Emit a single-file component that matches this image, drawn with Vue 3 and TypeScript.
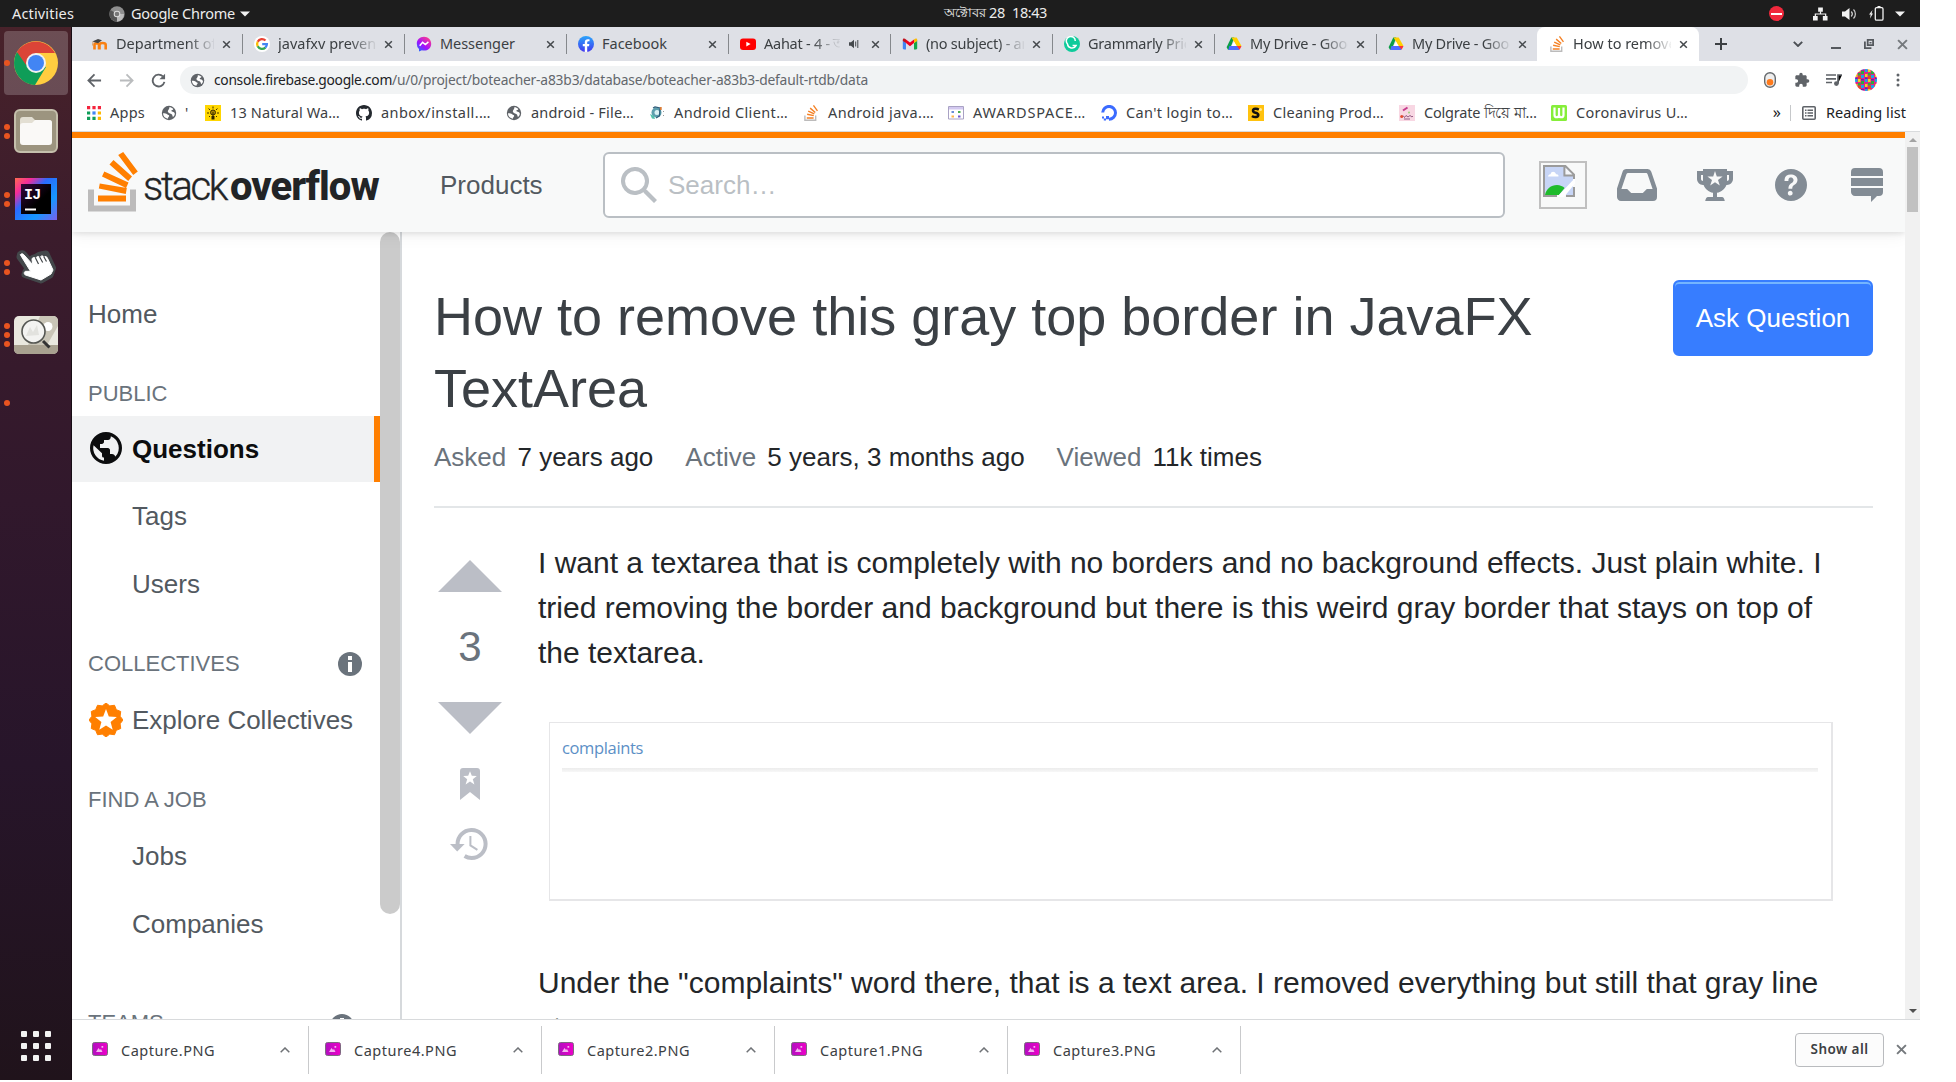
<script setup lang="ts">
interface Glyph { box: string; body: string }
interface Tab { icon: string; label: string; w?: number; ls?: boolean; audio?: boolean; active?: boolean }
interface Bookmark { icon: string; label: string; w: number; span: number }

// Stretches or tightens the tracking of a label so that it takes the given width.
const vFit = {
  mounted(el: HTMLElement, binding: { value?: number }) {
    if (!binding.value) return
    const count = (el.textContent || '').trim().length
    const natural = el.getBoundingClientRect().width
    el.style.letterSpacing = `${((binding.value - natural) / count).toFixed(3)}px`
  },
}

const so = '<path fill="#bcbbbb" d="M12 10.5h1.4V16H1.2v-5.500h1.400v4.100H12z"/><path fill="#f48024" d="M3.800 12.300h6.800v1.400H3.800zM4 9.900l.3-1.300 6.600 1.400-.3 1.300zM4.900 6.700l.6-1.200 6.100 2.800-.6 1.200zM6.700 3.700l.9-1.100 5.100 4.400-.9 1zM9.900.8l1.100-.8 4 5.400-1.100.8z"/>'
const globe = '<circle cx="8" cy="8" r="7.200" fill="#5f6368"/><path fill="#fff" d="M2 8.200c2 .1 3.300 0 4.200 1 .7.700 2 .7 2 1.700 0 .8-1.300.9-1.300 2.800C4 13.300 2 11 2 8.200zM8.300 2.300c1.600 0 2.900.6 4 1.700-.2 1.200-1.700.8-2 1.800-.3 1.200 3 .4 3.500 2.800.1 1.300-.7 2.600-1.800 3.500-.8-1.200-.4-2.800-1.800-3.200-1.500-.3-3.300-1.200-3.400-2.400 0-1.700 1.900-2 1.500-4.200z"/>'
const drive = '<path fill="#0b9d48" d="M5.300 1.500h3L3.700 13.800H2L.6 11.300z"/><path fill="#ffcf00" d="M5.500 1.500h5.200l4.800 8.600h-4.900z"/><path fill="#4e6cff" d="M3.400 10.100H15l-2 4H2.400z"/><path fill="#fff" d="M8 5.500l2.600 4.600H5.500z"/><path fill="#f33" d="M10.800 10.100h4.700l-1.900 3.700z"/>'

const glyphs: Record<string, Glyph> = {
  so: { box: '0 0 16 16', body: so },
  globe: { box: '0 0 16 16', body: globe },
  drive: { box: '0 0 16 16', body: drive },
  moodle: { box: '0 0 16 16', body: '<path d="M2.500 13.500V8.800C2.500 6.800 7 6.800 7 8.800v4.700M7.500 13.500V8.800c0-2.400 6.200-2.400 6.200 0v4.700" fill="none" stroke="#f98012" stroke-width="2.600"/><path d="M.3 5.500L6 3l4 1.200-4 3z" fill="#444"/><path d="M1 5.600L.5 9.500" stroke="#d9a26e"/>' },
  google: { box: '0 0 16 16', body: '<circle cx="8" cy="8" r="8" fill="#fff"/><g fill="none" stroke-width="2.300"><path stroke="#ea4335" d="M3.700 5.700A4.900 4.900 0 0111.500 4.500"/><path stroke="#fbbc05" d="M3.700 10.400a4.900 4.900 0 010-4.700"/><path stroke="#34a853" d="M3.700 10.300a4.900 4.900 0 007.700 1.300"/><path stroke="#4285f4" d="M8.200 8.100h4.700a4.800 4.800 0 01-1.600 3.600"/></g>' },
  messenger: { box: '0 0 16 16', body: '<defs><linearGradient id="ms" x1="0" y1="1" x2=".8" y2="0"><stop offset="0" stop-color="#0a7cff"/><stop offset=".45" stop-color="#a010ff"/><stop offset="1" stop-color="#ff3d8a"/></linearGradient></defs><path fill="url(#ms)" d="M8 .8c4.200 0 7.200 3 7.200 6.900 0 4-3 6.900-7.200 6.900-.8 0-1.500-.1-2.100-.3L3 15.400v-2.500A6.700 6.700 0 01.8 7.700C.8 3.800 3.800.8 8 .8z"/><path d="M3.700 9.800L6.600 6.300l2.800 2.300 3-2.700" fill="none" stroke="#fff" stroke-width="1.500"/>' },
  facebook: { box: '0 0 16 16', body: '<defs><linearGradient id="fb" x1="0" y1="0" x2="0" y2="1"><stop offset="0" stop-color="#2ba5fb"/><stop offset="1" stop-color="#4338ee"/></linearGradient></defs><circle cx="8" cy="8" r="8" fill="url(#fb)"/><path fill="#fff" d="M6.800 15.900v-5.600h-2V8h2V6.300c0-2 1.200-3.100 3-3.100.9 0 1.700.1 1.700.1v2h-1c-1 0-1.300.6-1.300 1.200V8h2.200l-.4 2.300H9.200v5.600z"/>' },
  youtube: { box: '0 0 16 16', body: '<rect y="2.400" width="16" height="11.500" rx="3" fill="#f00"/><path fill="#fff" d="M6.300 5.800l4.300 2.300-4.300 2.300z"/>' },
  gmail: { box: '0 0 16 16', body: '<path fill="#4285f4" d="M.8 4.500L4 7v6.400H2c-.7 0-1.200-.5-1.200-1.200z"/><path fill="#16a84a" d="M15.200 4.500L12 7v6.400h2c.7 0 1.200-.5 1.200-1.200z"/><path fill="#f00020" d="M4 3.600l4 3 4-3V7l-4 3.200L4 7z"/><path fill="#c1121f" d="M.8 4c0-1.600 1.700-1.900 3.200-.4v3.500L.8 4.900z"/><path fill="#fbbc04" d="M15.200 4c0-1.600-1.700-1.900-3.200-.4v3.500l3.200-2.200z"/>' },
  grammarly: { box: '0 0 16 16', body: '<circle cx="8" cy="8" r="8" fill="#0ecb9b"/><path d="M11.300 4.900A4.500 4.500 0 103.500 8a4.500 4.500 0 008.500 1.600H8.600" fill="none" stroke="#fff" stroke-width="1.500"/>' },
  apps: { box: '0 0 16 16', body: '<path fill="#f4243d" d="M1 1h3.200v3.200H1zM6.400 1h3.200v3.200H6.400zM11.800 1H15v3.200h-3.200z"/><path fill="#0f9d58" d="M1 6.400h3.200v3.200H1zM1 11.800h3.200V15H1zM6.400 11.800h3.200V15H6.400z"/><path fill="#4285f4" d="M6.400 6.400h3.200v3.200H6.400z"/><path fill="#ffb900" d="M11.800 6.400H15v3.200h-3.200zM11.800 11.800H15V15h-3.200z"/>' },
  bulb: { box: '0 0 16 16', body: '<path fill="#ffd600" d="M0 0h16v16H0z"/><circle cx="8" cy="7.500" r="2.500" fill="#ab8600" stroke="#3b2f00"/><path stroke="#3b2f00" fill="none" d="M8 1.500v2M2 8h2M12 8h2M3.600 3.500L5 5M12.400 3.500L11 5M4 12l1-1M12 12l-1-1M8 7v4"/><path fill="#2b2200" d="M6.500 11h3v3.500h-3z"/>' },
  github: { box: '0 0 16 16', body: '<path fill="#24292f" fill-rule="evenodd" d="M8 0C3.580 0 0 3.580 0 8c0 3.540 2.290 6.530 5.470 7.590.4.070.55-.17.55-.38 0-.19-.01-.82-.01-1.490-2.010.37-2.530-.49-2.690-.94-.09-.23-.48-.94-.82-1.130-.28-.15-.68-.52-.01-.53.63-.01 1.080.58 1.230.82.72 1.210 1.870.87 2.330.66.07-.52.28-.87.51-1.070-1.780-.2-3.640-.89-3.640-3.950 0-.87.31-1.590.82-2.150-.08-.2-.36-1.020.08-2.120 0 0 .67-.21 2.200.82.64-.18 1.320-.27 2-.27s1.360.09 2 .27c1.530-1.040 2.200-.82 2.200-.82.44 1.100.16 1.920.08 2.120.51.56.82 1.270.82 2.150 0 3.070-1.870 3.750-3.650 3.950.29.25.54.73.54 1.480 0 1.070-.01 1.930-.01 2.200 0 .21.15.46.55.38A8 8 0 0016 8c0-4.420-3.580-8-8-8z"/>' },
  client: { box: '0 0 16 16', body: '<circle cx="7.500" cy="7.500" r="5" fill="#5d9fae"/><circle cx="8" cy="7.500" r="2.500" fill="#d9f1f4"/><path d="M4 3l2-1 5 1-.5 8-3.500 2" fill="none" stroke="#2d5b78" stroke-width="1.200"/><path fill="#d97b35" d="M11 2h1.700v3H11z"/><path fill="#52c0ac" d="M1 9l4 2 1 3-3-.5z"/><path fill="#999" d="M14 6h1v1h-1zM14 10h1v1h-1z"/>' },
  award: { box: '0 0 16 16', body: '<path fill="#fff" stroke="#a9a2c4" d="M.5 1.500h15v12.500H.5z"/><path fill="#d3c9f0" d="M1 2h14v2.500H1z"/><path fill="#4caf50" d="M10 6h2.500v2H10z"/><path fill="#6a8fd8" d="M3.500 6H6v2H3.500z"/><path fill="#ffb547" d="M3.500 10.500H6v2H3.500z"/><path fill="#6e5bd1" d="M10 10.500h2.500v2H10z"/>' },
  ocean: { box: '0 0 16 16', body: '<path fill="none" stroke="#3b6bff" stroke-width="3" d="M1.700 7.500A6.400 6.400 0 118 14.200"/><path fill="#3b6bff" d="M5 11h3v3.200H5zM2.800 13.500H5v2H2.800zM1 11.500h2v2H1z"/>' },
  s: { box: '0 0 16 16', body: '<path fill="#ffc20e" d="M0 0h16v16H0z"/><path d="M10.800 4.700C9 3.300 5 3.400 5 5.700c0 2.600 5.300 1.500 5.300 4.300 0 2.500-4.300 2.500-6.300.9" fill="none" stroke="#111" stroke-width="2.500"/><circle cx="12.500" cy="4.500" r="1.500" fill="#ffe89a"/>' },
  pink: { box: '0 0 16 16', body: '<path fill="#f8d7e3" d="M0 0h16v16H0z"/><path stroke="#c53b8d" stroke-width="2" d="M4 5.500l4.500-3"/><path stroke="#7a3b6b" stroke-width=".8" d="M4 10.500l1.500 2 1.500-2 2 1.500 2-1.500 2 1.500 1-1M5 14h6" fill="none"/><circle cx="2.700" cy="11.500" r="1.500" fill="#e44b2f"/><circle cx="10" cy="7.500" r="1" fill="#9bd07e"/>' },
  w: { box: '0 0 16 16', body: '<rect width="16" height="16" rx="1.500" fill="#86ee3a"/><path d="M3.500 2.500V10c0 3 4.500 3 4.500 0V3v7c0 3 4.500 3 4.500 0V2.500" fill="none" stroke="#fff" stroke-width="2.200"/>' },
  back: { box: '0 0 16 16', body: '<path d="M15 8H2M8 1.500L1.500 8 8 14.500" fill="none" stroke="#5f6368" stroke-width="1.900"/>' },
  forward: { box: '0 0 16 16', body: '<path d="M1 8h13M8 1.500L14.500 8 8 14.500" fill="none" stroke="#babcbe" stroke-width="1.900"/>' },
  reload: { box: '0 0 16 16', body: '<path d="M14.300 9.500A6.300 6.300 0 1112.700 3.700" fill="none" stroke="#5f6368" stroke-width="2"/><path fill="#5f6368" d="M15 .7v6H9z"/>' },
  close: { box: '0 0 10 10', body: '<path d="M1.300 1.300l7.400 7.400M8.700 1.300L1.300 8.700" stroke="#45494d" stroke-width="1.700"/>' },
  closeSoft: { box: '0 0 10 10', body: '<path d="M1 1l8 8M9 1L1 9" stroke="#75797d" stroke-width="1.800"/>' },
  audio: { box: '0 0 10 10', body: '<path fill="#45494d" d="M0 3.300h2L5 .7v8.600L2 6.700H0z"/><path d="M6.700 2.500v5M8.800 1v8" stroke="#45494d" stroke-width="1"/>' },
  plus: { box: '0 0 12 12', body: '<path d="M6 0v12M0 6h12" stroke="#3c4043" stroke-width="2"/>' },
  down: { box: '0 0 10 6', body: '<path d="M.8.800L5 5 9.200.8" fill="none" stroke="#4b4f54" stroke-width="1.900"/>' },
  min: { box: '0 0 10 10', body: '<path fill="#55595e" d="M0 8h10v2H0z"/>' },
  restore: { box: '0 0 10 10', body: '<path d="M3.700.900h5.400v5.300H3.700zM.9 2.500v6.600h6.500" fill="none" stroke="#55595e" stroke-width="1.800"/><path fill="#55595e" d="M5.500 3h2v1.500h-2z"/>' },
  mouse: { box: '0 0 12 16', body: '<rect x=".7" y=".7" width="10.600" height="14.600" rx="5.300" fill="#eee" stroke="#65696d" stroke-width="1.400"/><circle cx="6" cy="10.300" r="3.300" fill="#ff7a1c"/>' },
  puzzle: { box: '0 0 24 24', body: '<path fill="#5f6368" d="M20.500 11H19V7c0-1.100-.9-2-2-2h-4V3.500a2.500 2.500 0 00-5 0V5H4c-1.100 0-2 .9-2 2v3.800h1.500a2.700 2.700 0 010 5.400H2V20c0 1.100.9 2 2 2h3.800v-1.500a2.700 2.700 0 015.400 0V22H17c1.100 0 2-.9 2-2v-4h1.500a2.500 2.500 0 000-5z"/>' },
  media: { box: '0 0 16 16', body: '<path stroke="#5f6368" stroke-width="1.700" d="M0 3h10M0 6.800h10M0 10.500h6M12 11.500V3H16"/><circle cx="10.400" cy="11.600" r="2.400" fill="#5f6368"/>' },
  menu: { box: '0 0 4 14', body: '<g fill="#5f6368"><circle cx="2" cy="2" r="1.500"/><circle cx="2" cy="7" r="1.500"/><circle cx="2" cy="12" r="1.500"/></g>' },
  avatar: { box: '0 0 22 22', body: '<defs><clipPath id="av"><circle cx="11" cy="11" r="11"/></clipPath><pattern id="pt" width="10" height="10" patternUnits="userSpaceOnUse"><path fill="#e3208b" d="M0 0h10v10H0z"/><path fill="#19a6e6" d="M0 0h2.500v3H0zM6 6h3v3H6z"/><path fill="#f3d51c" d="M3 0h2.500v3H3zM0 5h2.500v3H0z"/><path fill="#30a83c" d="M6 2h3v3H6zM3 4h2.500v2.500H3z"/><path fill="#e8442a" d="M3 7h3v3H3z"/><path fill="#6b23b5" d="M6 0h3v1.500H6zM0 8.500h2.500V10H0z"/></pattern></defs><path fill="url(#pt)" clip-path="url(#av)" d="M0 0h22v22H0z"/>' },
  list: { box: '0 0 14 14', body: '<rect x=".8" y=".8" width="12.400" height="12.400" rx="1" fill="none" stroke="#5f6368" stroke-width="1.600"/><path stroke="#5f6368" stroke-width="1.400" d="M3 4.300h1.500M5.500 4.300h5.500M3 7h1.500M5.500 7h5.500M3 9.700h1.500M5.500 9.700h5.500"/>' },
  inbox: { box: '0 1 20 16', body: '<path fill="#838c95" d="M15.190 1H4.630c-.85 0-1.600.54-1.850 1.350L0 10.790V15c0 1.100.9 2 2 2h16a2 2 0 002-2v-4.210l-2.870-8.440A2 2 0 0015.190 1zm-.28 10l-2 2H7.090l-2-2H2.200l2.500-7.360A.93.93 0 015.570 3h8.860c.39 0 .74.26.86.64L17.800 11z"/>' },
  trophy: { box: '0 1 18 16', body: '<path fill="#838c95" fill-rule="evenodd" d="M15 2V1H3v1H0v4c0 1.600 1.400 3 3 3h.3C4 11 5.800 12.500 8 12.900V15H5.500c-.7 0-1.100.6-1.400 2h9.800c-.3-1.400-.7-2-1.400-2H10v-2.100c2.200-.4 4-1.900 4.700-3.900h.3c1.600 0 3-1.400 3-3V2zM3 7c-.5 0-1-.5-1-1V4h1zm13-1c0 .5-.5 1-1 1V4h1zm-4.600 3.300L9 7.600 6.600 9.300l.9-2.800L5.200 4.800h2.900L9 2l.9 2.800h2.900l-2.300 1.700z"/>' },
  help: { box: '1 1 16 16', body: '<path fill="#838c95" d="M9 1a8 8 0 100 16A8 8 0 009 1zm.81 12.130c-.02.71-.55 1.150-1.240 1.130-.66-.02-1.170-.49-1.150-1.200.02-.72.56-1.180 1.220-1.160.7.03 1.200.51 1.170 1.230zM11.770 8a5.800 5.800 0 01-1.020.91l-.53.37c-.26.2-.42.43-.5.69a4 4 0 00-.09.75c0 .05-.03.16-.18.16H7.880c-.16 0-.18-.1-.18-.15.03-.66.12-1.210.4-1.660a5.290 5.290 0 011.430-1.220c.16-.12.28-.25.38-.39a1.340 1.340 0 00.02-1.710c-.24-.31-.51-.46-1.030-.46-.51 0-.8.26-1.020.6-.21.33-.18.73-.18 1.100H5.750c0-1.380.35-2.250 1.100-2.760.52-.35 1.170-.5 1.930-.5 1 0 1.790.18 2.490.71.640.5.98 1.180.98 2.120 0 .57-.2 1.050-.48 1.440z"/>' },
  exchange: { box: '1 1 16 17', body: '<path fill="#838c95" d="M15 1H3a2 2 0 00-2 2v2h16V3a2 2 0 00-2-2zM1 13c0 1.100.9 2 2 2h8v3l3-3h1a2 2 0 002-2v-2H1v2zm16-7H1v4h16V6z"/>' },
  search: { box: '0 0 18 18', body: '<path fill="#babfc4" d="M18 16.500l-5.140-5.180h-.35a7 7 0 10-1.190 1.190v.35L16.500 18l1.500-1.500zM12 7A5 5 0 112 7a5 5 0 0110 0z"/>' },
  info: { box: '0 0 24 24', body: '<circle cx="12" cy="12" r="12" fill="#6a737c"/><path fill="#fff" d="M10 4h4v4h-4zM10 10h4v10h-4z"/>' },
  world: { box: '1 1 16 16', body: '<path fill="#0c0d0e" d="M9 1a8 8 0 100 16A8 8 0 009 1zM8 15.320a6.460 6.460 0 01-4.300-2.740 6.460 6.460 0 01-.93-5.010L7 11.680v.8c0 .88.12 1.320 1 1.320v1.520zm5.720-2c-.2-.66-1-1.320-1.720-1.320h-1v-2c0-.44-.56-1-1-1H6V7h1c.44 0 1-.56 1-1V5h2c.88 0 1.400-.72 1.400-1.600v-.33a6.450 6.450 0 013.830 4.510 6.450 6.450 0 01-1.510 5.730v.01z"/>' },
  history: { box: '0 0 19 16', body: '<path fill="none" stroke="#bbbec6" stroke-width="2" d="M3.800 8.300A7 7 0 1110.800 15a7 7 0 01-3.500-1"/><path fill="#bbbec6" d="M0 8h7.300L3.600 11.700z"/><path fill="none" stroke="#bbbec6" d="M10.200 4v4.700l3.500 2.200"/>' },
  bookmark: { box: '0 0 10 16', body: '<path fill="#bbbec6" d="M1.500 0h7A1.500 1.500 0 0110 1.500V16l-5-4-5 4V1.500A1.500 1.500 0 011.500 0z"/><path fill="#fff" d="M5 1.600l.9 2.300 2.500.1-2 1.600.8 2.600L5 6.800 2.800 8.200l.8-2.600-2-1.600 2.500-.1z"/>' },
  png: { box: '0 0 16 14', body: '<defs><linearGradient id="pg"><stop offset="0" stop-color="#b010c0"/><stop offset="1" stop-color="#ee00c8"/></linearGradient></defs><rect x=".5" y=".5" width="15" height="13" rx="2" fill="url(#pg)" stroke="#7d6a80"/><path fill="#f4b5f0" d="M4 10l2.500-4L8 8l1-1 1.500 3zM9.500 4h1.700v1.700H9.500z"/>' },
  caret: { box: '0 0 10 6', body: '<path d="M.7 5.300L5 1l4.300 4.300" fill="none" stroke="#6f7276" stroke-width="1.500"/>' },
  broken: { box: '0 0 16 16', body: '<path fill="#c7d5f6" d="M1 1h10l4 4v10H1z"/><path fill="#fff" d="M2.500 5.800c0-1 1-1.200 1.300-1.200.3-1.600 2.200-1.500 2.700 0 1.300 0 1.700 1.200.9 1.200z"/><path fill="#1fbb2c" d="M1 15c.5-3 3-5 6-5 1.500 0 3 .7 3.800 1.500L8 15z"/><path fill="#fff" d="M16 6.500v2.700L10.500 16H7z"/><path fill="#f4f6fa" d="M11 1v4h4z"/><path d="M.5 16V.5h10.700l4.300 4.300V7M15.500 11v4.500H11.500M.5 15.500H7M10.700.5v4.800h5" fill="none" stroke="#9b9b9b"/>' },
  chrome: { box: '0 0 44 44', body: '<circle cx="22" cy="22" r="22" fill="#ffcd40"/><path fill="#0f9d58" d="M22 22L3 11a22 22 0 0018 33l11-18z"/><path fill="#db4437" d="M3 11a22 22 0 0138 1H22L12 24z"/><circle cx="22" cy="22" r="10" fill="#f1f1f1"/><circle cx="22" cy="22" r="8" fill="#4285f4"/>' },
  files: { box: '0 0 44 44', body: '<rect x="1" y="1" width="42" height="42" rx="5" fill="#9c947f" stroke="#c5bfac" stroke-width="2"/><path fill="#e3dfd3" d="M6 11c0-2 1-3 3-3h9l3 3h14c2 0 3 1 3 3v8H6z"/><path fill="#faf9f7" d="M6 17c0-2 1-3 3-3h9l3-3h14c2 0 3 1 3 3v19c0 2-1 3-3 3H9c-2 0-3-1-3-3z"/>' },
  hand: { box: '0 0 40 34', body: '<path fill="#fff" stroke="#43474a" stroke-width="7" stroke-linejoin="round" d="M4.500 4.500c1-1 2.300-1 3.300.2L17 16l-.5-7.500 4-1.500 2.500-1.500 4-1 3-.5 6.500 14-2.500 7L25 30 9 24.500l1-3 5 .5L4 7z"/><path fill="#fff" stroke="#fff" stroke-linejoin="round" d="M4.300 4.700c1-1.200 2.500-1.200 3.500 0l9 10-.8-5c0-2.700 2.800-3 3.800-.7.300-3 3-3.500 4.200-1 .4-2.500 3-2.800 4-.7 1.400-1.500 2.700-.8 3.500 1L37 20l-2 4-10 6L9.500 25c-2-.8-1.500-3.800.5-3.700h4.500z"/><path stroke="#43474a" stroke-width="1.200" d="M19.500 8l3 6M23.700 7l3 5.500M27.700 6.500l2.800 5"/>' },
  viewer: { box: '0 0 44 38', body: '<rect width="44" height="38" rx="5" fill="#e9e8df"/><path fill="#c9c5b7" d="M26 0h13c3 0 5 2 5 5v5L33 29H14z"/><path fill="#a8a190" d="M0 29h44v4c0 3-2 5-5 5H5c-3 0-5-2-5-5z"/><circle cx="34" cy="10.500" r="4.500" fill="#fff"/><circle cx="19.500" cy="15.500" r="11.500" fill="#f3f3f1" stroke="#555753" stroke-width="1.600"/><path fill="#e2e2de" d="M12 20l4-9 3 5 4-7 2 10z"/><path stroke="#333" stroke-width="3" d="M29 25l6.500 6.500"/>' },
  idea: { box: '0 0 42 42', body: '<defs><linearGradient id="ij" x1="0" y1="0" x2="1" y2="1"><stop offset="0" stop-color="#ff6a50"/><stop offset=".2" stop-color="#f52c9a"/><stop offset=".4" stop-color="#2a6bff"/><stop offset=".7" stop-color="#1697ff"/><stop offset="1" stop-color="#7a60ee"/></linearGradient><linearGradient id="ik" x1="0" y1="0" x2="1" y2="1"><stop offset="0" stop-color="#34063c"/><stop offset=".6" stop-color="#000"/></linearGradient></defs><path fill="url(#ij)" d="M0 0h42v42H0z"/><path fill="url(#ik)" d="M6 6h30v30H6z"/><path fill="#fff" d="M10 30.500h11v2H10z"/><text x="9" y="21" fill="#fff" font-family="Liberation Mono" font-weight="700" font-size="15" letter-spacing="-.8">IJ</text>' },
  mono: { box: '0 0 16 16', body: '<circle cx="8" cy="8" r="7.700" fill="#8e8e8e"/><path fill="#555" d="M8 8L1.500 4a7.700 7.700 0 006 11.600L11 9z"/><path fill="#bbb" d="M8 8h4l3 0a7.700 7.700 0 01-7 7.700z"/><circle cx="8" cy="8" r="3.300" fill="#ddd"/><circle cx="8" cy="8" r="2.300" fill="#777"/>' },
  net: { box: '0 0 16 14', body: '<path fill="#f2f2f2" d="M5.500 0h5v4.500h-5zM0 9h5v5H0zM10.500 9h5v5h-5z"/><path d="M8 4v3M2.500 9V7h11v2" fill="none" stroke="#f2f2f2" stroke-width="1.300"/>' },
  volume: { box: '0 0 15 12', body: '<path fill="#f2f2f2" d="M0 3.500h3L7.500 0v12L3 8.500H0z"/><path d="M9.300 3.500c1.300 1.500 1.300 3.500 0 5M11.500 1.500c2.500 2.500 2.500 6.500 0 9" fill="none" stroke="#ccc" stroke-width="1.200"/>' },
  battery: { box: '0 0 15 15', body: '<path fill="#f2f2f2" d="M3.500 4L0 8.500h1.700L1 12.500l3-5H2.600zM8.500 0h3v1.500h-3z"/><rect x="6.300" y="1.600" width="7.700" height="12.600" rx="1.300" fill="none" stroke="#f2f2f2" stroke-width="1.300"/>' },
  tri: { box: '0 0 10 6', body: '<path fill="#f2f2f2" d="M0 .5h10L5 5.500z"/>' },
}

const burst = Array.from({ length: 24 }, (_, i) => {
  const r = i % 2 ? 14.6 : 17
  const a = (i * Math.PI) / 12
  return `${(17 + r * Math.sin(a)).toFixed(2)},${(17 - r * Math.cos(a)).toFixed(2)}`
}).join(' ')

const tabs: Tab[] = [
  { icon: 'moodle', label: 'Department of' },
  { icon: 'google', label: 'javafxv prevent' },
  { icon: 'messenger', label: 'Messenger', w: 75 },
  { icon: 'facebook', label: 'Facebook', w: 65 },
  { icon: 'youtube', label: 'Aahat - 4 - আহট', audio: true, ls: true },
  { icon: 'gmail', label: '(no subject) - an', ls: true },
  { icon: 'grammarly', label: 'Grammarly Prices', ls: true },
  { icon: 'drive', label: 'My Drive - Google', ls: true },
  { icon: 'drive', label: 'My Drive - Google', ls: true },
  { icon: 'so', label: 'How to remove t', active: true },
]

const bookmarks: Bookmark[] = [
  { icon: 'bulb', label: '13 Natural Wa…', w: 110, span: 151 },
  { icon: 'github', label: 'anbox/install.…', w: 110, span: 150 },
  { icon: 'globe', label: 'android - File…', w: 103, span: 143 },
  { icon: 'client', label: 'Android Client…', w: 114, span: 154 },
  { icon: 'so', label: 'Android java.…', w: 106, span: 145 },
  { icon: 'award', label: 'AWARDSPACE…', w: 113, span: 153 },
  { icon: 'ocean', label: "Can't login to…", w: 107, span: 147 },
  { icon: 's', label: 'Cleaning Prod…', w: 111, span: 151 },
  { icon: 'pink', label: 'Colgrate দিয়ে মা…', w: 112, span: 152 },
  { icon: 'w', label: 'Coronavirus U…', w: 112, span: 150 },
]

const dock = [
  { icon: 'chrome', w: 44, h: 44, dots: 1, on: true },
  { icon: 'files', w: 44, h: 44, dots: 2 },
  { icon: 'idea', w: 42, h: 42, dots: 2 },
  { icon: 'hand', w: 40, h: 34, dots: 2 },
  { icon: 'viewer', w: 44, h: 38, dots: 3 },
  { icon: '', w: 0, h: 0, dots: 1 },
]

const downloads = ['Capture.PNG', 'Capture4.PNG', 'Capture2.PNG', 'Capture1.PNG', 'Capture3.PNG']
const headIcons = [
  { icon: 'inbox', w: 40, h: 32, gap: 30 },
  { icon: 'trophy', w: 36, h: 32, gap: 40 },
  { icon: 'help', w: 32, h: 32, gap: 42 },
  { icon: 'exchange', w: 32, h: 34, gap: 44 },
]
</script>

<template>
  <div class="screen">
    <header class="topbar">
      <span v-fit="62" class="t activities">Activities</span>
      <svg class="mono" :viewBox="glyphs.mono.box" v-html="glyphs.mono.body" />
      <span v-fit="104" class="t">Google Chrome</span>
      <svg class="tri" :viewBox="glyphs.tri.box" v-html="glyphs.tri.body" />
      <span class="clock"><span class="t bn">অক্টোবর</span><span v-fit="16" class="t">28</span><span v-fit="35" class="t time">18:43</span></span>
      <span class="tray">
        <i class="dnd" />
        <svg class="net" :viewBox="glyphs.net.box" v-html="glyphs.net.body" />
        <svg class="vol" :viewBox="glyphs.volume.box" v-html="glyphs.volume.body" />
        <svg class="bat" :viewBox="glyphs.battery.box" v-html="glyphs.battery.body" />
        <svg class="tri" :viewBox="glyphs.tri.box" v-html="glyphs.tri.body" />
      </span>
    </header>

    <div class="desktop">
      <aside class="dock">
        <div v-for="(d, i) in dock" :key="i" class="launcher">
          <span class="dots"><i v-for="n in d.dots" :key="n" /></span>
          <span class="tile" :class="{ on: d.on }">
            <svg v-if="d.icon" :width="d.w" :height="d.h" :viewBox="glyphs[d.icon].box" v-html="glyphs[d.icon].body" />
          </span>
        </div>
        <div class="grid"><i v-for="n in 9" :key="n" /></div>
      </aside>

      <section class="window">
        <div class="tabs">
          <div v-for="(t, i) in tabs" :key="i" class="tab" :class="{ active: t.active, first: i === 0 }">
            <svg class="fav" :viewBox="glyphs[t.icon].box" v-html="glyphs[t.icon].body" />
            <span class="tlabel" :class="{ short: t.audio, full: t.w, tight: t.ls }"><span v-fit="t.w">{{ t.label }}</span></span>
            <svg v-if="t.audio" class="audio" :viewBox="glyphs.audio.box" v-html="glyphs.audio.body" />
            <svg class="x" :viewBox="glyphs.close.box" v-html="glyphs.close.body" />
          </div>
          <svg class="plus" :viewBox="glyphs.plus.box" v-html="glyphs.plus.body" />
          <span class="controls">
            <svg width="10" height="6" :viewBox="glyphs.down.box" v-html="glyphs.down.body" />
            <svg width="10" height="10" :viewBox="glyphs.min.box" v-html="glyphs.min.body" />
            <svg width="10" height="10" :viewBox="glyphs.restore.box" v-html="glyphs.restore.body" />
            <svg width="11" height="11" :viewBox="glyphs.closeSoft.box" v-html="glyphs.closeSoft.body" />
          </span>
        </div>

        <div class="toolbar">
          <svg width="15" height="15" :viewBox="glyphs.back.box" v-html="glyphs.back.body" />
          <svg width="15" height="15" :viewBox="glyphs.forward.box" v-html="glyphs.forward.body" />
          <svg width="15" height="15" :viewBox="glyphs.reload.box" v-html="glyphs.reload.body" />
          <div class="omnibox">
            <svg width="15" height="15" :viewBox="glyphs.globe.box" v-html="glyphs.globe.body" />
            <span v-fit="178" class="host">console.firebase.google.com</span><span v-fit="476" class="path">/u/0/project/boteacher-a83b3/database/boteacher-a83b3-default-rtdb/data</span>
          </div>
          <div class="ext">
            <svg width="12" height="16" :viewBox="glyphs.mouse.box" v-html="glyphs.mouse.body" />
            <svg width="16" height="16" :viewBox="glyphs.puzzle.box" v-html="glyphs.puzzle.body" />
            <svg width="16" height="16" :viewBox="glyphs.media.box" v-html="glyphs.media.body" />
            <svg width="22" height="22" :viewBox="glyphs.avatar.box" v-html="glyphs.avatar.body" />
            <svg width="4" height="14" :viewBox="glyphs.menu.box" v-html="glyphs.menu.body" />
          </div>
        </div>

        <div class="bookmarks">
          <svg class="bi" :viewBox="glyphs.apps.box" v-html="glyphs.apps.body" /><span class="apps"><span v-fit="35">Apps</span></span>
          <svg class="bi" :viewBox="glyphs.globe.box" v-html="glyphs.globe.body" /><span class="tick">'</span>
          <div v-for="b in bookmarks" :key="b.label" class="bm" :style="{ width: b.span + 'px' }">
            <svg class="bi" :viewBox="glyphs[b.icon].box" v-html="glyphs[b.icon].body" /><span v-fit="b.w">{{ b.label }}</span>
          </div>
          <div class="reading">
            <span class="more">»</span>
            <i class="vsep" />
            <svg width="14" height="14" :viewBox="glyphs.list.box" v-html="glyphs.list.body" />
            <span v-fit="80">Reading list</span>
          </div>
        </div>

        <div class="viewport">
          <div class="page">
            <div class="sohead">
              <svg class="logo" viewBox="0 0 50 60"><path fill="#bcbbbb" d="M42 37.500h6V59.500H0v-22h6v16h36z" /><g fill="#ff7f00"><path d="M10 43.500h28v6H10zM11.800 31.500l27 4.500-1 6L10.800 36.500zM16.300 19.500l24.200 11-2.400 5.500L14 24.500zM25.500 8l18.500 16.500-3.800 4.500L21.500 12.500zM35.200 0l14.600 19.500-4.600 3.500-15-20z" /></g></svg>
              <span class="brand"><span v-fit="83" class="light">stack</span><b v-fit="148">overflow</b></span>
              <span class="products">Products</span>
              <div class="search">
                <svg width="36" height="36" :viewBox="glyphs.search.box" v-html="glyphs.search.body" />
                <span>Search…</span>
              </div>
              <span class="avatar"><svg width="32" height="32" :viewBox="glyphs.broken.box" v-html="glyphs.broken.body" /></span>
              <svg v-for="h in headIcons" :key="h.icon" :width="h.w" :height="h.h" :style="{ marginLeft: h.gap + 'px' }" :viewBox="glyphs[h.icon].box" v-html="glyphs[h.icon].body" />
            </div>

            <div class="body">
              <nav class="nav">
                <div class="links">
                  <a class="home">Home</a>
                  <h4>PUBLIC</h4>
                  <a class="sel"><svg class="lead" :viewBox="glyphs.world.box" v-html="glyphs.world.body" />Questions</a>
                  <a class="sub">Tags</a>
                  <a class="sub">Users</a>
                  <h4>COLLECTIVES<svg width="24" height="24" :viewBox="glyphs.info.box" v-html="glyphs.info.body" /></h4>
                  <a><svg class="burst" viewBox="0 0 34 34"><polygon :points="burst" fill="#ff7f00" stroke="#ff7f00" stroke-linejoin="round" /><path fill="#fff" d="M17 6l2.800 7.500 8 .4-6.200 5.100 2.100 7.800-6.700-4.400-6.700 4.400 2.100-7.800-6.200-5.100 8-.4z" /></svg>Explore Collectives</a>
                  <h4 class="job">FIND A JOB</h4>
                  <a class="sub">Jobs</a>
                  <a class="sub">Companies</a>
                  <h4 class="teams">TEAMS<svg width="24" height="24" :viewBox="glyphs.info.box" v-html="glyphs.info.body" /></h4>
                </div>
                <div class="navbar"><i /></div>
              </nav>

              <main class="main">
                <div class="qhead">
                  <h1>How to remove this gray top border in JavaFX TextArea</h1>
                  <button>Ask Question</button>
                </div>
                <div class="meta">
                  <span>Asked</span><b>7 years ago</b>
                  <span>Active</span><b>5 years, 3 months ago</b>
                  <span>Viewed</span><b>11k times</b>
                </div>
                <div class="question">
                  <div class="votes">
                    <svg width="64" height="32" viewBox="0 0 64 32"><path fill="#bbbec6" d="M0 32h64L32 0z" /></svg>
                    <span class="count">3</span>
                    <svg width="64" height="32" viewBox="0 0 64 32"><path fill="#bbbec6" d="M0 0h64L32 32z" /></svg>
                    <svg class="save" width="20" height="32" :viewBox="glyphs.bookmark.box" v-html="glyphs.bookmark.body" />
                    <svg class="hist" width="38" height="32" :viewBox="glyphs.history.box" v-html="glyphs.history.body" />
                  </div>
                  <div class="prose">
                    <p>I want a textarea that is completely with no borders and no background effects. Just plain white. I tried removing the border and background but there is this weird gray border that stays on top of the textarea.</p>
                    <div class="shot"><span v-fit="81">complaints</span><i /></div>
                    <p>Under the "complaints" word there, that is a text area. I removed everything but still that gray line stays.</p>
                  </div>
                </div>
              </main>
            </div>
          </div>
          <div class="scroll"><i class="up" /><i class="thumb" /><i class="dn" /></div>
        </div>

        <div class="shelf">
          <div v-for="d in downloads" :key="d" class="dl">
            <svg width="16" height="14" :viewBox="glyphs.png.box" v-html="glyphs.png.body" />
            <span v-fit="d.length > 11 ? 103 : 94">{{ d }}</span>
            <svg class="caret" width="10" height="6" :viewBox="glyphs.caret.box" v-html="glyphs.caret.body" />
          </div>
          <span class="showall"><span v-fit="58">Show all</span></span>
          <svg class="sx" width="11" height="11" :viewBox="glyphs.closeSoft.box" v-html="glyphs.closeSoft.body" />
        </div>
      </section>
    </div>
  </div>
</template>

<style>
html, body { background: #fff; overflow: hidden; }
</style>

<style scoped>
.screen { width: 1920px; height: 1080px; font-family: "Noto Sans", "Open Sans", sans-serif; font-size: 14.5px; color: #3c4043; }
.screen * { box-sizing: border-box; }
svg { display: block; flex: none; }
i { display: block; flex: none; }
span[class], .t { white-space: nowrap; }
.topbar { height: 27px; background: #1d1d1d; color: #ececec; display: flex; align-items: center; position: relative; padding-left: 12px; }
.t { display: inline-block; line-height: 25px; }
.activities { width: auto; margin-right: 35px; }
.mono { width: 16px; height: 16px; margin-right: 6px; }
.tri { width: 10px; height: 6px; margin-left: 5px; }
.clock { position: absolute; left: 944px; top: 0; display: flex; height: 27px; }
.bn { width: 41px; margin-right: 4px; font-size: 13px; }
.time { margin-left: 7px; }
.tray { margin-left: auto; display: flex; align-items: center; padding-right: 15px; }
.dnd { width: 15px; height: 15px; border-radius: 50%; background: #f0283c; margin-right: 29px; display: flex; align-items: center; justify-content: center; }
.dnd::after { content: ""; width: 11px; height: 2px; background: #fff; }
.net { width: 15px; height: 14px; margin-right: 14px; }
.vol { width: 15px; height: 12px; margin-right: 12px; }
.bat { width: 15px; height: 15px; margin-right: 6px; }

.desktop { display: flex; height: 1053px; }
.dock { width: 72px; flex: none; background: linear-gradient(180deg, #48222a 0, #3b1c2c 20%, #31182c 45%, #27152a 70%, #20131b 100%); display: flex; flex-direction: column; padding-top: 2px; border-right: 1px solid #170d14; }
.launcher { height: 68px; display: flex; align-items: center; flex: none; }
.dots { width: 4px; display: flex; flex-direction: column; gap: 3px; align-items: flex-start; }
.dots i { width: 6px; height: 6px; border-radius: 50%; background: #e95420; margin-left: 4px; position: relative; z-index: 1; }
.tile { width: 64px; height: 64px; border-radius: 4px; display: flex; align-items: center; justify-content: center; }
.tile.on { background: rgba(255, 255, 255, .2); }
.grid { margin: auto 0 19px 21px; display: grid; grid-template-columns: repeat(3, 6px); gap: 6px; }
.grid i { width: 6px; height: 6px; border-radius: 1px; background: #f2f2f2; }

.window { width: 1848px; display: flex; flex-direction: column; background: #fff; }
.tabs { height: 34px; flex: none; background: #dee0e6; display: flex; align-items: center; padding-left: 8px; }
.tab { width: 162px; height: 34px; flex: none; display: flex; align-items: center; padding-left: 12px; position: relative; }
.tab::before { content: ""; position: absolute; left: 0; top: 7px; width: 1px; height: 20px; background: #85888c; }
.tab.first::before, .tab.active::before { display: none; }
.tab.active { background: #fff; border-radius: 8px 8px 0 0; left: -1px; }
.fav { width: 16px; height: 16px; margin-right: 8px; }
.tlabel { width: 98px; overflow: hidden; height: 24px; line-height: 23px; mask-image: linear-gradient(90deg, #000 72px, transparent 100px); }
.tlabel > span { display: inline-block; white-space: nowrap; }
.tlabel.tight > span { letter-spacing: -.25px; }
.tlabel.short { width: 76px; mask-image: linear-gradient(90deg, #000 48px, transparent 78px); }
.tlabel.full { mask-image: none; }
.audio { width: 10px; height: 10px; margin: 0 4px 0 9px; }
.x { width: 9px; height: 9px; margin-left: 8px; }
.plus { width: 12px; height: 12px; margin-left: 15px; }
.controls { margin-left: auto; padding-right: 12px; display: flex; align-items: center; gap: 23px; }
.controls svg:nth-child(2) { margin-left: 5px; }
.toolbar { height: 38px; flex: none; display: flex; align-items: center; padding-left: 15px; gap: 17px; }
.omnibox { width: 1568px; height: 28px; margin-left: -3px; border-radius: 14px; background: #f1f3f4; display: flex; align-items: center; padding-left: 10px; color: #63676c; font-size: 13.8px; }
.omnibox svg { margin-right: 9px; }
.host { color: #202124; }
.host, .path { display: inline-block; line-height: 26px; }
.ext { display: flex; align-items: center; gap: 16px; margin-left: -1px; }
.ext svg:nth-child(2) { margin-left: 2px; }
.ext svg:nth-child(4) { margin-left: -3px; }
.ext svg:nth-child(5) { margin-left: 3px; }
.bookmarks { height: 33px; flex: none; display: flex; align-items: center; padding: 0 14px 4px; border-bottom: 1px solid #d9dbdd; }
.bookmarks span { display: inline-block; white-space: nowrap; line-height: 24px; }
.bookmarks > span, .bm > span, .reading > span { margin-top: -2px; }
.bi { width: 16px; height: 16px; margin-right: 8px; }
.bm .bi { margin-right: 9px; }
.apps { width: 51px; }
.tick { width: 20px; }
.bm { display: flex; align-items: center; flex: none; }
.reading { margin-left: auto; display: flex; align-items: center; color: #202124; }
.more { margin-right: 9px; font-size: 16px; }
.vsep { width: 1px; height: 16px; background: #c6c8ca; margin-right: 11px; }
.reading svg { margin-right: 10px; }

.viewport { height: 887px; flex: none; display: flex; overflow: hidden; }
.page { width: 1833px; height: 887px; overflow: hidden; display: flex; flex-direction: column; font-family: "Liberation Sans", Arial, sans-serif; }
.sohead { height: 100px; flex: none; border-top: 6px solid #ff7f00; background: #f8f9f9; display: flex; align-items: center; padding-left: 16px; position: relative; z-index: 2; box-shadow: 0 2px 4px rgba(0, 0, 0, .05), 0 2px 8px rgba(0, 0, 0, .05), 0 4px 16px rgba(0, 0, 0, .05); }
.logo { width: 50px; height: 60px; margin: -7px 5px 0 0; }
.brand { width: 297px; margin-top: 4px; font: 300 40px/60px Roboto, sans-serif; color: #222426; display: flex; }
.brand > * { display: inline-block; }
.brand .light { margin-right: 4px; -webkit-text-stroke: .4px #222426; }
.brand b { font-weight: 800; }
.products { width: 163px; font-size: 26px; color: #525960; }
.search { width: 902px; height: 66px; border: 2px solid #babfc4; border-radius: 6px; background: #fff; display: flex; align-items: center; padding-left: 16px; gap: 12px; font-size: 26px; color: #babfc4; }
.search span { margin-left: -1px; }
.avatar { width: 48px; height: 48px; border: 2px solid #c0c0c0; padding: 2px; margin-left: 34px; }
.body { display: flex; height: 787px; flex: none; }
.nav { width: 330px; flex: none; border-right: 2px solid #d6d9dc; display: flex; color: #525960; }
.links { width: 308px; padding-top: 49px; display: flex; flex-direction: column; }
.links a { height: 66px; flex: none; padding-left: 16px; font-size: 26px; display: flex; align-items: center; margin-bottom: 2px; white-space: nowrap; }
.links a.home { margin-bottom: 0; }
.links a.sub { padding-left: 60px; }
.links a.sel { background: #f1f2f3; border-right: 6px solid #ff7f00; color: #0c0d0e; font-weight: 700; margin-bottom: 1px; }
.lead { width: 32px; height: 32px; margin: -3px 10px 0 2px; }
.burst { width: 34px; height: 34px; margin: 0 9px 0 1px; }
.links h4 { margin: 0; height: 69px; flex: none; padding: 35px 18px 0 16px; font-size: 22px; line-height: 23px; font-weight: 400; color: #6a737c; display: flex; justify-content: space-between; }
.links a.sub + h4:not(.teams) { height: 68px; padding-top: 33px; }
.links h4.job { height: 68px; padding-top: 33px; }
.links h4.teams { padding: 52px 26px 0 16px; height: 90px; }
.links h4.teams svg { margin-top: 3px; }
.navbar { width: 20px; }
.navbar i { width: 20px; height: 682px; border-radius: 10px; background: #cbcbcb; }
.main { width: 1503px; padding: 48px 32px 0; flex: none; }
.qhead { display: flex; justify-content: space-between; align-items: flex-start; height: 146px; }
h1 { margin: 0; width: 1180px; font-size: 54px; line-height: 72px; font-weight: 400; color: #3b4045; }
button { width: 200px; height: 76px; border: 2px solid #377dff; border-radius: 6px; background: #377dff; box-shadow: inset 0 2px 0 #74b5ff; color: #fff; font: 26px "Liberation Sans", sans-serif; padding: 0; }
.meta { display: flex; height: 82px; border-bottom: 2px solid #e3e6e8; font-size: 26px; line-height: 30px; padding-top: 16px; white-space: nowrap; }
.meta span { color: #6a737c; margin-right: 11.2px; }
.meta b { font-weight: 400; color: #232629; margin-right: 32px; }
.question { display: flex; }
.votes { width: 72px; padding-top: 52px; display: flex; flex-direction: column; align-items: center; }
.count { height: 110px; line-height: 110px; font-size: 42px; color: #6a737c; }
.save { margin-top: 34px; }
.hist { margin: 28px 3px 0 0; }
.prose { width: 1367px; padding: 32px 0 0 32px; font-size: 30px; line-height: 45px; color: #232629; }
.prose p { margin: 0; width: 1303px; }
.shot { width: 1284px; height: 179px; margin: 47px 0 59px 11px; border: 2px solid #e6e6e8; border-width: 1px 2px 2px 1px; padding: 12px 13px 0 12px; font: 16.5px/26px "Open Sans", sans-serif; color: #5c8fc6; }
.shot span { display: inline-block; white-space: nowrap; }
.shot i { height: 4px; background: linear-gradient(#ececec, #f7f7f7); margin-top: 7px; }
.scroll { width: 15px; background: #f1f1f1; display: flex; flex-direction: column; align-items: center; }
.up { border: 4px solid transparent; border-top: 0; border-bottom: 4px solid #a3a3a3; margin: 6px 0 5px; }
.thumb { width: 11px; height: 65px; background: #c1c1c1; }
.dn { margin: auto 0 6px; border: 4px solid transparent; border-bottom: 0; border-top: 4px solid #505050; }

.shelf { height: 61px; flex: none; border-top: 1px solid #d8dadc; display: flex; align-items: center; }
.dl { width: 233px; height: 48px; display: flex; align-items: center; padding-left: 16px; position: relative; margin-left: 4px; margin-right: -4px; }
.dl::after { content: ""; position: absolute; right: 0; top: 0; width: 1px; height: 48px; background: #c9cacc; }
.dl svg { margin-top: -2px; }
.dl span { display: inline-block; white-space: nowrap; margin-left: 13px; line-height: 24px; margin-top: -1px; }
.dl .caret { margin: 0 19px 0 auto; }
.showall { margin-left: auto; width: 89px; height: 34px; border: 1px solid #b9bbbe; border-radius: 4px; background: #fcfcfc; display: flex; align-items: center; justify-content: center; font-weight: 600; font-size: 13.5px; margin-top: -1px; }
.showall span { display: inline-block; white-space: nowrap; margin-top: -1px; }
.sx { margin: -2px 13px 0 12px; }
</style>
